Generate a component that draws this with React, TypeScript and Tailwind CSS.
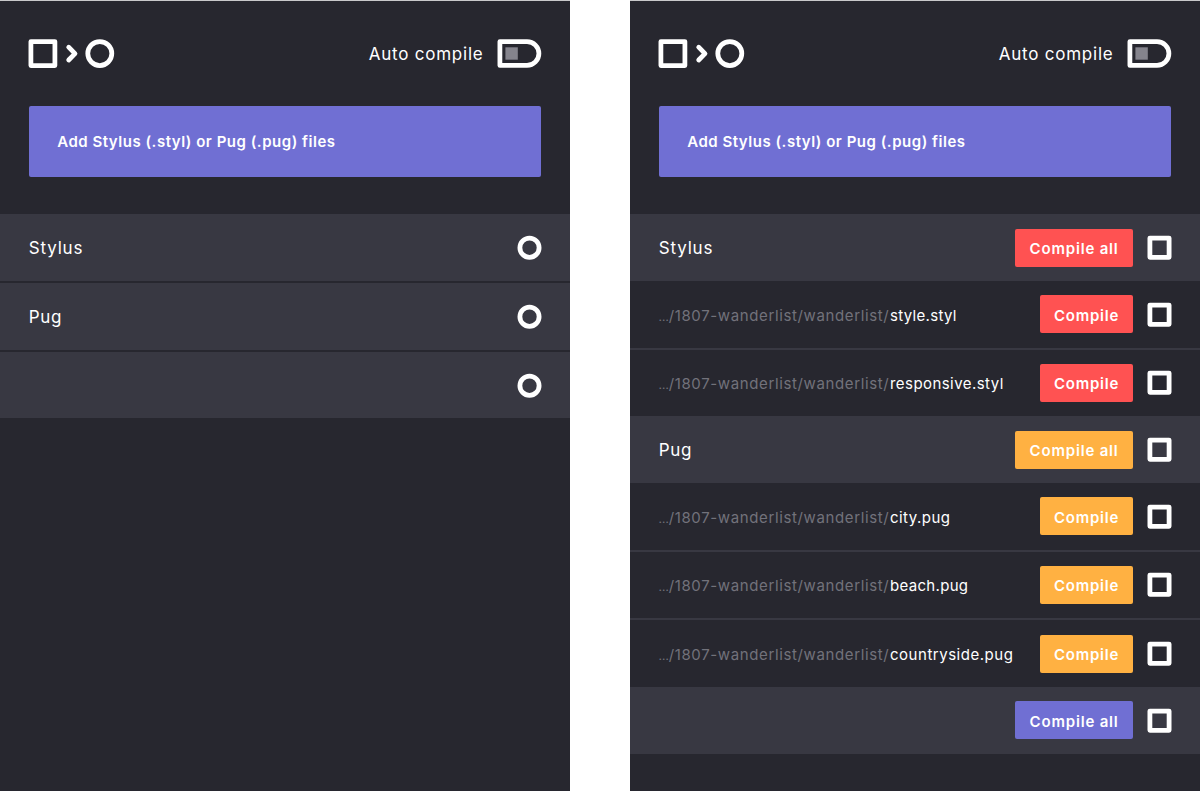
type FileItem = { name: string; tracking: string };
type Group = { label: string; tracking: string; color: string; files: FileItem[] };

const groups: Group[] = [
  {
    label: "Stylus",
    tracking: "tracking-[0.8px]",
    color: "bg-[#ff5252]",
    files: [
      { name: "style.styl", tracking: "tracking-[0.32px]" },
      { name: "responsive.styl", tracking: "tracking-[0.44px]" },
    ],
  },
  {
    label: "Pug",
    tracking: "tracking-[0.6px]",
    color: "bg-[#ffb142]",
    files: [
      { name: "city.pug", tracking: "tracking-[0.45px]" },
      { name: "beach.pug", tracking: "tracking-[0.32px]" },
      { name: "countryside.pug", tracking: "tracking-[0.52px]" },
    ],
  },
  { label: "", tracking: "", color: "bg-[#706fd3]", files: [] },
];

function Logo() {
  return (
    <svg width="88" height="30" viewBox="0 0 88 30" fill="none" stroke="#fff" strokeWidth="4.75">
      <rect x="2.9" y="2.5" width="24" height="24" strokeLinejoin="round" />
      <path d="M40.7 8.2 47 14.6l-6.3 6.4" strokeWidth="4.75" strokeLinecap="round" strokeLinejoin="round" />
      <circle cx="71.8" cy="14.5" r="12" />
    </svg>
  );
}

function Toggle() {
  return (
    <svg width="45" height="30" viewBox="0 0 45 30" fill="none">
      <path d="M2.9 2.6H30a11.9 11.9 0 0 1 0 23.8H2.9Z" stroke="#fff" strokeWidth="4.75" strokeLinejoin="round" />
      <rect x="8.4" y="8.3" width="12.4" height="12.4" fill="#85848d" />
    </svg>
  );
}

function Header() {
  return (
    <>
      <header className="mt-[38px] flex h-[30px] items-center justify-between px-[28px]">
        <Logo />
        <div className="flex items-center">
          <span className="mr-[13.5px] text-[17px] leading-[30px] tracking-[0.77px]">Auto compile</span>
          <Toggle />
        </div>
      </header>
      <button className="mx-[28.6px] mt-[36.6px] flex h-[71.4px] items-center rounded-[2px] bg-[#706fd3] px-[28.6px] pt-[2px] text-left text-[15px] font-semibold tracking-[0.52px]">
        Add Stylus (.styl) or Pug (.pug) files
      </button>
    </>
  );
}

function SquareIcon() {
  return (
    <svg width="25" height="25" viewBox="0 0 25 25" className="shrink-0">
      <rect x="2.9" y="3.1" width="19.2" height="19.2" fill="none" stroke="#fff" strokeWidth="4.8" strokeLinejoin="round" />
    </svg>
  );
}

function CircleIcon() {
  return (
    <svg width="25" height="25" viewBox="0 0 25 25" className="shrink-0">
      <circle cx="12.5" cy="12.7" r="9.6" fill="none" stroke="#fff" strokeWidth="4.8" />
    </svg>
  );
}

function CompileButton({ all, color }: { all?: boolean; color: string }) {
  return (
    <button
      className={`mr-[13.6px] flex h-[38px] items-center justify-center rounded-[2px] pt-[3px] text-[15px] font-semibold ${color} ${
        all ? "w-[118.6px] tracking-[0.82px]" : "w-[93.8px] tracking-[0.78px]"
      }`}
    >
      {all ? "Compile all" : "Compile"}
    </button>
  );
}

function EmptyPanel() {
  return (
    <section className="flex h-[791px] w-[570px] flex-col border-t border-[#c9c9cb] bg-[#27272f]">
      <Header />
      <div className="mt-[37.3px] flex flex-col gap-[2.05px]">
        {groups.map((g) => (
          <div key={g.label} className="flex h-[66.67px] items-center justify-between bg-[#383842] px-[28px]">
            <span className={`pt-[2px] pl-[0.8px] text-[17px] ${g.tracking}`}>{g.label}</span>
            <CircleIcon />
          </div>
        ))}
      </div>
    </section>
  );
}

function FilesPanel() {
  return (
    <section className="flex h-[791px] w-[570px] flex-col border-t border-[#c9c9cb] bg-[#27272f]">
      <Header />
      <div className="mt-[37.3px] flex flex-col">
        {groups.map((g) => (
          <div key={g.label}>
            <div className="flex h-[66.67px] items-center bg-[#383842] px-[28px]">
              <span className={`mr-auto pt-[2px] pl-[0.8px] text-[17px] ${g.tracking}`}>{g.label}</span>
              <CompileButton all color={g.color} />
              <SquareIcon />
            </div>
            <div className="flex flex-col gap-[2.05px] bg-[#383842]">
              {g.files.map((f) => (
                <div key={f.name} className="flex h-[66.67px] items-center bg-[#27272f] px-[28px] text-[15px]">
                  <span className="w-[232px] shrink-0 pt-[3px] pl-[0.6px] whitespace-nowrap tracking-[0.63px] text-[#72727b]">
                    <span className="text-[12px] tracking-[-0.3px]">…</span>/1807-wanderlist/wanderlist/
                  </span>
                  <span className={`mr-auto pt-[3px] whitespace-nowrap ${f.tracking}`}>{f.name}</span>
                  <CompileButton color={g.color} />
                  <SquareIcon />
                </div>
              ))}
            </div>
          </div>
        ))}
      </div>
    </section>
  );
}

export default function App() {
  return (
    <main className="flex h-[791px] w-[1200px] justify-between overflow-hidden bg-white font-['Inter',sans-serif] text-white">
      <EmptyPanel />
      <FilesPanel />
    </main>
  );
}
